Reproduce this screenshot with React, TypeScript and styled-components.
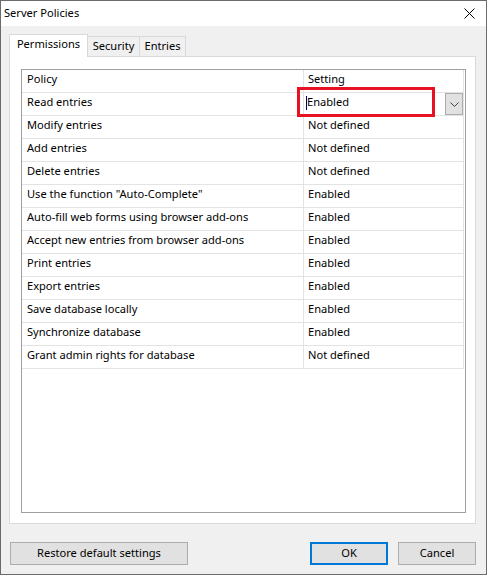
import React from "react";
import styled, { createGlobalStyle } from "styled-components";

const Global = createGlobalStyle`
  html, body { margin: 0; padding: 0; background: #ffffff; }
  body { font-family: "Noto Sans", "Open Sans", sans-serif; font-size: 11.1px; color: #000; }
  * { box-sizing: border-box; }
`;

const Window = styled.div`
  width: 487px;
  height: 575px;
  border: 1px solid #6b6b6b;
  background: #f0f0f0;
  display: flex;
  flex-direction: column;
  position: relative;
`;

const TitleBar = styled.div`
  height: 25px;
  background: #ffffff;
  display: flex;
  align-items: center;
  justify-content: space-between;
  padding: 0 0 0 3px;
`;

const TitleText = styled.span`
  padding-bottom: 3px;
`;

const CloseButton = styled.div`
  width: 46px;
  height: 25px;
  display: flex;
  align-items: center;
  justify-content: center;
  padding-left: 12px;
`;

const Body = styled.div`
  flex: 1;
  display: flex;
  flex-direction: column;
  padding: 8px 10px 9px 8px;
`;

const TabStrip = styled.div`
  display: flex;
  align-items: flex-end;
  height: 22px;
`;

const Tab = styled.div<{ $active?: boolean; $w: number }>`
  width: ${(p) => p.$w}px;
  height: ${(p) => (p.$active ? 23 : 20)}px;
  margin-bottom: ${(p) => (p.$active ? -1 : 0)}px;
  background: ${(p) => (p.$active ? "#ffffff" : "#f0f0f0")};
  border: 1px solid #d9d9d9;
  border-bottom: none;
  ${(p) => (p.$active ? "" : "margin-left: -1px;")}
  position: relative;
  z-index: ${(p) => (p.$active ? 2 : 1)};
  display: flex;
  align-items: center;
  justify-content: center;
  padding-bottom: ${(p) => (p.$active ? 5 : 2)}px;
  white-space: nowrap;
`;

const Panel = styled.div`
  height: 468px;
  background: #ffffff;
  border: 1px solid #d9d9d9;
  padding: 12px 9px 10px 11px;
  display: flex;
`;

const Grid = styled.div`
  flex: 1;
  border: 1px solid #a0a0a0;
  background: #ffffff;
  display: flex;
  flex-direction: column;
  align-items: flex-start;
`;

const Row = styled.div`
  display: grid;
  grid-template-columns: 282px 160px;
  height: 23px;
  width: 442px;
  border-right: 1px solid #e3e3e3;
  border-bottom: 1px solid #e3e3e3;
  position: relative;
`;

const Cell = styled.div<{ $divider?: boolean; $pad?: number }>`
  display: flex;
  align-items: center;
  padding-left: ${(p) => p.$pad ?? 5}px;
  padding-bottom: 5px;
  white-space: nowrap;
  ${(p) => (p.$divider ? "border-right: 1px solid #e3e3e3;" : "")}
`;

const Caret = styled.span`
  display: inline-block;
  width: 1px;
  height: 14px;
  margin-top: 2px;
  background: #000060;
`;

const DropButton = styled.div`
  position: absolute;
  right: 0;
  top: 0;
  width: 18px;
  height: 22px;
  background: #e1e1e1;
  border: 1px solid #adadad;
  display: flex;
  align-items: center;
  justify-content: center;
`;

const Highlight = styled.div`
  position: absolute;
  left: 296px;
  top: 86px;
  width: 138px;
  height: 30px;
  border: 3px solid #e81123;
  pointer-events: none;
`;

const ButtonRow = styled.div`
  display: flex;
  margin-top: 18px;
  padding-left: 1px;
  gap: 10px;
`;

const Spacer = styled.div`
  flex: 1;
`;

const Button = styled.div<{ $w: number; $default?: boolean }>`
  width: ${(p) => p.$w}px;
  height: 23px;
  background: #e1e1e1;
  border: ${(p) => (p.$default ? "2px solid #0078d7" : "1px solid #adadad")};
  display: flex;
  align-items: center;
  justify-content: center;
  padding-bottom: 3px;
`;

const rows: [string, string][] = [
  ["Read entries", "Enabled"],
  ["Modify entries", "Not defined"],
  ["Add entries", "Not defined"],
  ["Delete entries", "Not defined"],
  ['Use the function "Auto-Complete"', "Enabled"],
  ["Auto-fill web forms using browser add-ons", "Enabled"],
  ["Accept new entries from browser add-ons", "Enabled"],
  ["Print entries", "Enabled"],
  ["Export entries", "Enabled"],
  ["Save database locally", "Enabled"],
  ["Synchronize database", "Enabled"],
  ["Grant admin rights for database", "Not defined"],
];

export default function App() {
  return (
    <>
      <Global />
      <Window>
        <TitleBar>
          <TitleText>Server Policies</TitleText>
          <CloseButton>
            <svg width="11" height="11" viewBox="0 0 11 11">
              <path d="M0.5 0.5 L10.5 10.5 M10.5 0.5 L0.5 10.5" stroke="#000" strokeWidth="1" fill="none" />
            </svg>
          </CloseButton>
        </TitleBar>
        <Body>
          <TabStrip>
            <Tab $active $w={79}>Permissions</Tab>
            <Tab $w={53}>Security</Tab>
            <Tab $w={47}>Entries</Tab>
          </TabStrip>
          <Panel>
            <Grid>
              <Row>
                <Cell $divider>Policy</Cell>
                <Cell $pad={4}>Setting</Cell>
              </Row>
              {rows.map(([policy, setting], i) => (
                <Row key={policy}>
                  <Cell $divider>{policy}</Cell>
                  {i === 0 ? (
                    <Cell $pad={2}>
                      <Caret />
                      {setting}
                      <DropButton>
                        <svg width="9" height="5" viewBox="0 0 9 5">
                          <path d="M0.5 0.5 L4.5 4.5 L8.5 0.5" stroke="#404040" strokeWidth="1" fill="none" />
                        </svg>
                      </DropButton>
                    </Cell>
                  ) : (
                    <Cell $pad={4}>{setting}</Cell>
                  )}
                </Row>
              ))}
            </Grid>
          </Panel>
          <ButtonRow>
            <Button $w={178}>Restore default settings</Button>
            <Spacer />
            <Button $w={78} $default>OK</Button>
            <Button $w={78}>Cancel</Button>
          </ButtonRow>
        </Body>
        <Highlight />
      </Window>
    </>
  );
}
